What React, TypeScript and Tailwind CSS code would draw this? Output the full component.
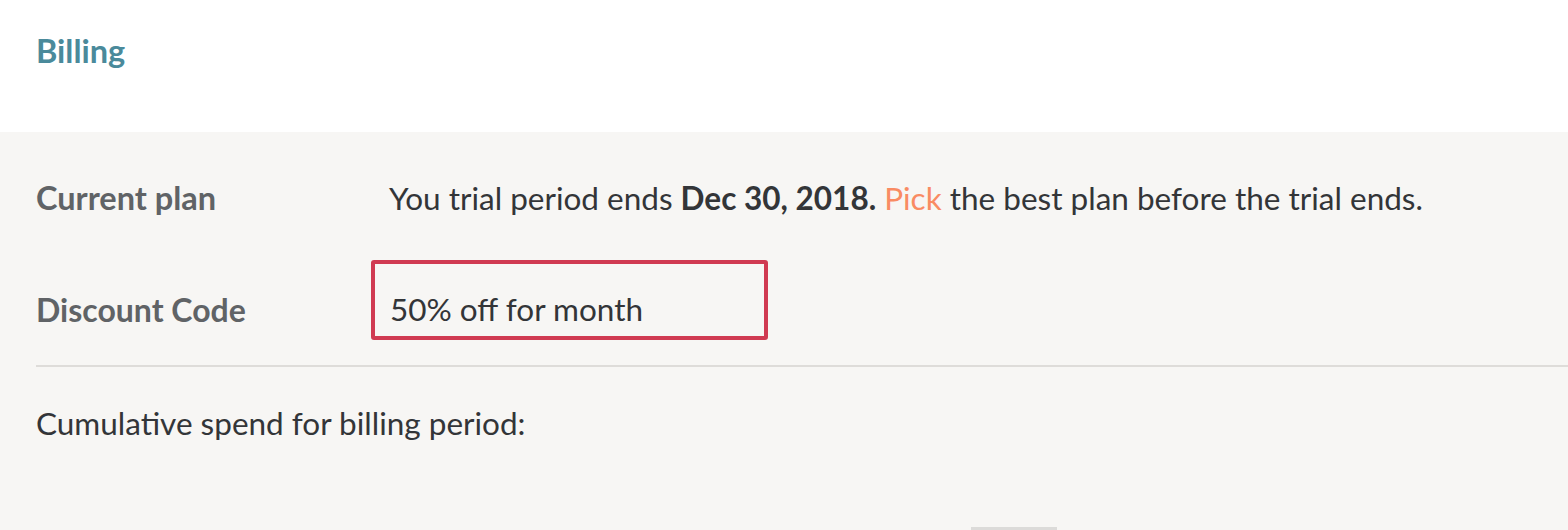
export default function App() {
  return (
    <div className="w-[1568px] h-[530px] overflow-hidden bg-[#f7f6f4] font-['Lato',sans-serif]">
      <div className="h-[132px] bg-white px-[36px] pt-[31px]">
        <h1 className="text-[32.5px] font-bold text-[#4a8a9b] leading-[40px]">Billing</h1>
      </div>
      <div className="pl-[36px] pt-[46px]">
        <div className="flex items-start">
          <div className="w-[353px] shrink-0 text-[32.5px] leading-[40px] font-bold text-[#606366]">Current plan</div>
          <div className="text-[31.5px] leading-[40px] text-[#333538]">
            You trial period ends <span className="font-bold">Dec 30, 2018.</span>{" "}
            <span className="text-[#f98b63]">Pick</span> the best plan before the trial ends.
          </div>
        </div>
        <div className="flex items-start mt-[42px]">
          <div className="w-[335px] shrink-0 mt-[30px] text-[32px] leading-[40px] font-bold text-[#606366]">Discount Code</div>
          <div className="w-[397px] h-[80px] border-[4px] border-[#d03a52] rounded-[3px] pl-[15px] pt-[25px] text-[31.5px] leading-[40px] text-[#333538]">
            50% off for month
          </div>
        </div>
        <div className="mt-[25px] h-[2px] bg-[#dedcd9]" />
        <div className="mt-[36px] text-[31.5px] leading-[40px] text-[#333538]">Cumulative spend for billing period:</div>
        <div className="mt-[84px] ml-[935px] w-[86px] h-[4px] bg-[#dcdbd9]" />
      </div>
    </div>
  );
}
